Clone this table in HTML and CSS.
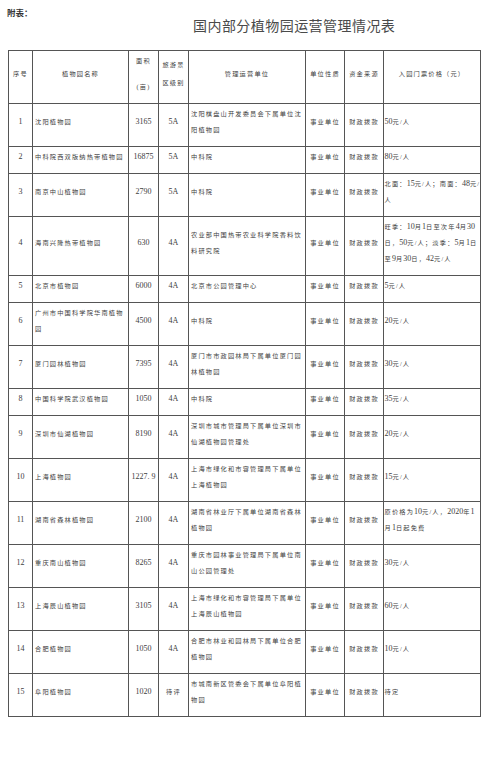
FILE: index.html
```html
<!DOCTYPE html>
<html lang="zh-CN">
<head>
<meta charset="utf-8">
<title>国内部分植物园运营管理情况表</title>
<link rel="stylesheet" href="styles.css">
</head>
<body>
<div class="page">
  <div class="label">附表：</div>
  <h1 class="title">国内部分植物园运营管理情况表</h1>
  <table class="grid">
    <colgroup>
      <col class="c-no"><col class="c-name"><col class="c-area"><col class="c-level"><col class="c-org"><col class="c-type"><col class="c-fund"><col class="c-price">
    </colgroup>
    <thead>
      <tr>
        <th>序号</th>
        <th>植物园名称</th>
        <th class="area-head"><div class="ah1">面积</div><div class="ah2">(亩)</div></th>
        <th class="lv-head">旅游景<br>区级别</th>
        <th>管理运营单位</th>
        <th>单位性质</th>
        <th>资金来源</th>
        <th>入园门票价格（元）</th>
      </tr>
    </thead>
    <tbody>
      <tr><td class="num">1</td><td class="left">沈阳植物园</td><td class="num">3165</td><td class="num">5A</td><td class="left">沈阳棋盘山开发委员会下属单位沈<br>阳植物园</td><td>事业单位</td><td>财政拨款</td><td class="price"><span class="d">50</span>元/人</td></tr>
      <tr><td class="num">2</td><td class="left">中科院西双版纳热带植物园</td><td class="num">16875</td><td class="num">5A</td><td class="left">中科院</td><td>事业单位</td><td>财政拨款</td><td class="price"><span class="d">80</span>元/人</td></tr>
      <tr><td class="num">3</td><td class="left">南京中山植物园</td><td class="num">2790</td><td class="num">5A</td><td class="left">中科院</td><td>事业单位</td><td>财政拨款</td><td class="price">北面：<span class="d">15</span>元/人；南面：<span class="d">48</span>元/<br>人</td></tr>
      <tr><td class="num">4</td><td class="left">海南兴隆热带植物园</td><td class="num">630</td><td class="num">4A</td><td class="left">农业部中国热带农业科学院香料饮<br>料研究院</td><td>事业单位</td><td>财政拨款</td><td class="price">旺季：<span class="d">10</span>月<span class="d">1</span>日至次年<span class="d">4</span>月<span class="d">30</span><br>日，<span class="d">50</span>元/人；淡季：<span class="d">5</span>月<span class="d">1</span>日<br>至<span class="d">9</span>月<span class="d">30</span>日，<span class="d">42</span>元/人</td></tr>
      <tr><td class="num">5</td><td class="left">北京市植物园</td><td class="num">6000</td><td class="num">4A</td><td class="left">北京市公园管理中心</td><td>事业单位</td><td>财政拨款</td><td class="price"><span class="d">5</span>元/人</td></tr>
      <tr><td class="num">6</td><td class="left">广州市中国科学院华南植物<br>园</td><td class="num">4500</td><td class="num">4A</td><td class="left">中科院</td><td>事业单位</td><td>财政拨款</td><td class="price"><span class="d">20</span>元/人</td></tr>
      <tr><td class="num">7</td><td class="left">厦门园林植物园</td><td class="num">7395</td><td class="num">4A</td><td class="left">厦门市市政园林局下属单位厦门园<br>林植物园</td><td>事业单位</td><td>财政拨款</td><td class="price"><span class="d">30</span>元/人</td></tr>
      <tr><td class="num">8</td><td class="left">中国科学院武汉植物园</td><td class="num">1050</td><td class="num">4A</td><td class="left">中科院</td><td>事业单位</td><td>财政拨款</td><td class="price"><span class="d">35</span>元/人</td></tr>
      <tr><td class="num">9</td><td class="left">深圳市仙湖植物园</td><td class="num">8190</td><td class="num">4A</td><td class="left">深圳市城市管理局下属单位深圳市<br>仙湖植物园管理处</td><td>事业单位</td><td>财政拨款</td><td class="price"><span class="d">20</span>元/人</td></tr>
      <tr><td class="num">10</td><td class="left">上海植物园</td><td class="num">1227. 9</td><td class="num">4A</td><td class="left">上海市绿化和市容管理局下属单位<br>上海植物园</td><td>事业单位</td><td>财政拨款</td><td class="price"><span class="d">15</span>元/人</td></tr>
      <tr><td class="num">11</td><td class="left">湖南省森林植物园</td><td class="num">2100</td><td class="num">4A</td><td class="left">湖南省林业厅下属单位湖南省森林<br>植物园</td><td>事业单位</td><td>财政拨款</td><td class="price">原价格为<span class="d">10</span>元/人，<span class="d">2020</span>年<span class="d">1</span><br>月<span class="d">1</span>日起免费</td></tr>
      <tr><td class="num">12</td><td class="left">重庆南山植物园</td><td class="num">8265</td><td class="num">4A</td><td class="left">重庆市园林事业管理局下属单位南<br>山公园管理处</td><td>事业单位</td><td>财政拨款</td><td class="price"><span class="d">30</span>元/人</td></tr>
      <tr><td class="num">13</td><td class="left">上海辰山植物园</td><td class="num">3105</td><td class="num">4A</td><td class="left">上海市绿化和市容管理局下属单位<br>上海辰山植物园</td><td>事业单位</td><td>财政拨款</td><td class="price"><span class="d">60</span>元/人</td></tr>
      <tr><td class="num">14</td><td class="left">合肥植物园</td><td class="num">1050</td><td class="num">4A</td><td class="left">合肥市林业和园林局下属单位合肥<br>植物园</td><td>事业单位</td><td>财政拨款</td><td class="price"><span class="d">10</span>元/人</td></tr>
      <tr><td class="num">15</td><td class="left">阜阳植物园</td><td class="num">1020</td><td>待评</td><td class="left">市城南新区管委会下属单位阜阳植<br>物园</td><td>事业单位</td><td>财政拨款</td><td class="price">待定</td></tr>
    </tbody>
  </table>
</div>
</body>
</html>
```

FILE: styles.css
```css
html, body {
  margin: 0;
  padding: 0;
  background: #ffffff;
}

.page {
  width: 500px;
  height: 763px;
  overflow: hidden;
  color: #404040;
  font-family: "Liberation Serif", "Noto Sans CJK SC", serif;
}

.label {
  padding: 7px 0 0 7px;
  font-family: "Noto Sans CJK SC", sans-serif;
  font-size: 8.5px;
  line-height: 10px;
  font-weight: bold;
  color: #333333;
}

.title {
  margin: 0;
  padding-left: 193px;
  font-family: "Noto Sans CJK SC", sans-serif;
  font-weight: normal;
  font-size: 14px;
  letter-spacing: 0.45px;
  line-height: 16px;
  color: #4a4a4a;
}

.grid {
  margin: 17px 0 0 8px;
  border-collapse: collapse;
  table-layout: fixed;
  width: 472px;
  border: 1px solid #555555;
}

.c-no { width: 24px; }
.c-name { width: 96px; }
.c-area { width: 30px; }
.c-level { width: 30px; }
.c-org { width: 117px; }
.c-type { width: 39px; }
.c-fund { width: 39px; }
.c-price { width: 97px; }

.grid th,
.grid td {
  border: 1px solid #555555;
  padding: 1.5px 2px 8.5px 2px;
  font-size: 6.2px;
  letter-spacing: 1.2px;
  line-height: 16px;
  font-weight: normal;
  text-align: center;
  vertical-align: middle;
  white-space: nowrap;
  overflow: visible;
  color: #404040;
}

.grid th.lv-head {
  line-height: 18px;
}

.ah1,
.ah2 {
  line-height: 16px;
}

.ah2 {
  margin-top: 10px;
}

.grid td.num {
  font-size: 8px;
  letter-spacing: 0;
}

.grid td.left {
  text-align: left;
}

.grid td.price {
  text-align: left;
  padding-left: 0.5px;
}

.d {
  font-size: 8px;
  letter-spacing: 0;
}
```
